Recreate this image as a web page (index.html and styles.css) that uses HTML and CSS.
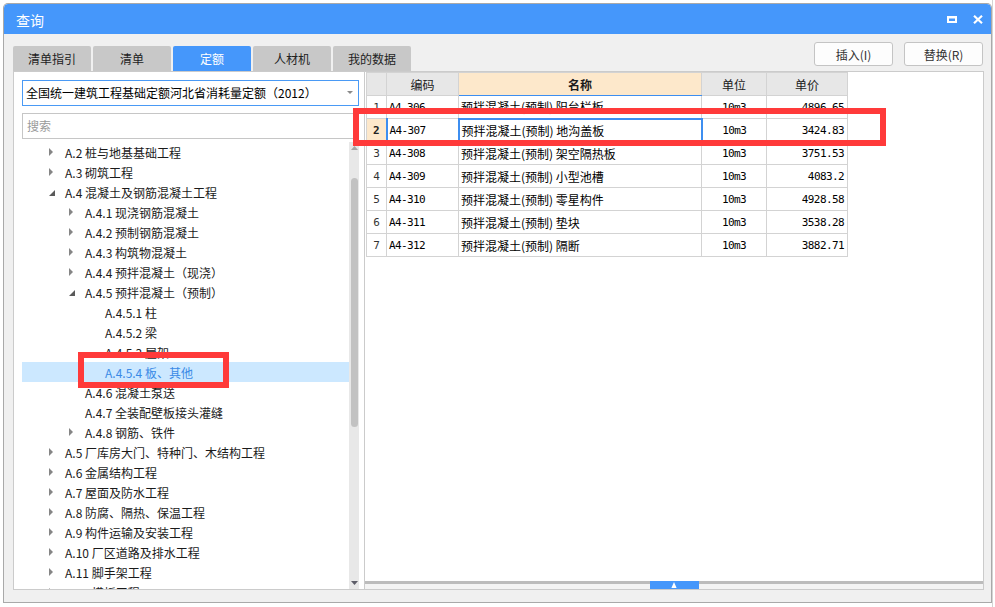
FILE: index.html
```html
<!DOCTYPE html>
<html lang="zh-CN">
<head>
<meta charset="utf-8">
<title>查询</title>
<link rel="stylesheet" href="styles.css">
</head>
<body>
<div class="desk">
  <div class="dialog">
    <div class="titlebar">
      <span class="title">查询</span>
      <div class="winbtns">
        <svg class="wb" width="10" height="7" viewBox="0 0 10 7"><path d="M0 0H10V7H0Z M2 2.6V5H8V2.6Z" fill="#fff" fill-rule="evenodd"/></svg>
        <svg class="wb" width="10" height="9" viewBox="0 0 10 9"><path d="M1 0.8L9 8.2M9 0.8L1 8.2" stroke="#fff" stroke-width="2.2"/></svg>
      </div>
    </div>
    <div class="body">
      <div class="toolbar">
        <div class="tabs">
          <div class="tab">清单指引</div>
          <div class="tab">清单</div>
          <div class="tab active">定额</div>
          <div class="tab">人材机</div>
          <div class="tab">我的数据</div>
        </div>
        <div class="actions">
          <button class="btn">插入(I)</button>
          <button class="btn">替换(R)</button>
        </div>
      </div>
      <div class="panels">
        <div class="leftpanel">
          <div class="select">
            <span class="select-text">全国统一建筑工程基础定额河北省消耗量定额（2012）</span>
            <svg class="caret" width="6" height="3" viewBox="0 0 6 3"><path d="M0 0H6L3 3Z" fill="#8a8a8a"/></svg>
          </div>
          <div class="search">搜索</div>
          <div class="treewrap">
            <ul class="tree">
              <li class="node l1"><span class="tw closed"></span><span>A.2 桩与地基基础工程</span></li>
              <li class="node l1"><span class="tw closed"></span><span>A.3 砌筑工程</span></li>
              <li class="node l1"><span class="tw open"></span><span>A.4 混凝土及钢筋混凝土工程</span></li>
              <li class="node l2"><span class="tw closed"></span><span>A.4.1 现浇钢筋混凝土</span></li>
              <li class="node l2"><span class="tw closed"></span><span>A.4.2 预制钢筋混凝土</span></li>
              <li class="node l2"><span class="tw closed"></span><span>A.4.3 构筑物混凝土</span></li>
              <li class="node l2"><span class="tw closed"></span><span>A.4.4 预拌混凝土（现浇）</span></li>
              <li class="node l2"><span class="tw open"></span><span>A.4.5 预拌混凝土（预制）</span></li>
              <li class="node l3"><span class="tw"></span><span>A.4.5.1 柱</span></li>
              <li class="node l3"><span class="tw"></span><span>A.4.5.2 梁</span></li>
              <li class="node l3"><span class="tw"></span><span>A.4.5.3 屋架</span></li>
              <li class="node l3 selected"><span class="tw"></span><span>A.4.5.4 板、其他</span></li>
              <li class="node l2"><span class="tw"></span><span>A.4.6 混凝土泵送</span></li>
              <li class="node l2"><span class="tw"></span><span>A.4.7 全装配壁板接头灌缝</span></li>
              <li class="node l2"><span class="tw closed"></span><span>A.4.8 钢筋、铁件</span></li>
              <li class="node l1"><span class="tw closed"></span><span>A.5 厂库房大门、特种门、木结构工程</span></li>
              <li class="node l1"><span class="tw closed"></span><span>A.6 金属结构工程</span></li>
              <li class="node l1"><span class="tw closed"></span><span>A.7 屋面及防水工程</span></li>
              <li class="node l1"><span class="tw closed"></span><span>A.8 防腐、隔热、保温工程</span></li>
              <li class="node l1"><span class="tw closed"></span><span>A.9 构件运输及安装工程</span></li>
              <li class="node l1"><span class="tw closed"></span><span>A.10 厂区道路及排水工程</span></li>
              <li class="node l1"><span class="tw closed"></span><span>A.11 脚手架工程</span></li>
              <li class="node l1"><span class="tw closed"></span><span>A.12 模板工程</span></li>
            </ul>
            <div class="vscroll">
              <div class="sb-btn"><svg width="7" height="4" viewBox="0 0 7 4"><path d="M3.5 0L7 4H0Z" fill="#a6a6a6"/></svg></div>
              <div class="sb-thumb"></div>
              <div class="sb-fill"></div>
              <div class="sb-btn"><svg width="7" height="4" viewBox="0 0 7 4"><path d="M0 0H7L3.5 4Z" fill="#5d5d68"/></svg></div>
            </div>
          </div>
        </div>
        <div class="rightpanel">
          <div class="gridarea">
            <table class="grid">
              <colgroup><col class="c-rn"><col class="c-code"><col class="c-name"><col class="c-unit"><col class="c-price"></colgroup>
              <thead>
                <tr><th></th><th>编码</th><th class="hsel">名称</th><th>单位</th><th>单价</th></tr>
              </thead>
              <tbody>
                <tr><td class="rn">1</td><td class="code">A4-306</td><td class="name">预拌混凝土(预制) 阳台栏板</td><td class="unit">10m3</td><td class="price">4896.65</td></tr>
                <tr><td class="rn rsel">2</td><td class="code">A4-307</td><td class="name csel">预拌混凝土(预制) 地沟盖板</td><td class="unit">10m3</td><td class="price">3424.83</td></tr>
                <tr><td class="rn">3</td><td class="code">A4-308</td><td class="name">预拌混凝土(预制) 架空隔热板</td><td class="unit">10m3</td><td class="price">3751.53</td></tr>
                <tr><td class="rn">4</td><td class="code">A4-309</td><td class="name">预拌混凝土(预制) 小型池槽</td><td class="unit">10m3</td><td class="price">4083.2</td></tr>
                <tr><td class="rn">5</td><td class="code">A4-310</td><td class="name">预拌混凝土(预制) 零星构件</td><td class="unit">10m3</td><td class="price">4928.58</td></tr>
                <tr><td class="rn">6</td><td class="code">A4-311</td><td class="name">预拌混凝土(预制) 垫块</td><td class="unit">10m3</td><td class="price">3538.28</td></tr>
                <tr><td class="rn">7</td><td class="code">A4-312</td><td class="name">预拌混凝土(预制) 隔断</td><td class="unit">10m3</td><td class="price">3882.71</td></tr>
              </tbody>
            </table>
          </div>
          <div class="splitter">
            <div class="handle"><svg width="6" height="6" viewBox="0 0 6 6"><path d="M3 0L5.6 6H0.4Z" fill="#fff"/></svg></div>
          </div>
        </div>
      </div>
    </div>
  </div>
  <div class="mark mark-row"></div>
  <div class="mark mark-tree"></div>
</div>
</body>
</html>
```

FILE: styles.css
```css
* { box-sizing: border-box; }
html, body { margin: 0; padding: 0; }
body {
  width: 995px;
  height: 607px;
  overflow: hidden;
  background: #fff;
  font-family: "Noto Sans CJK SC", "Noto Sans", sans-serif;
  font-size: 12px;
  color: #1a1a1a;
}
.desk {
  position: relative;
  width: 995px;
  height: 607px;
  background: #fff linear-gradient(to right, transparent 992px, #d4d4d4 992px, #d4d4d4 993px, transparent 993px);
}
.dialog {
  position: absolute;
  left: 4px;
  top: 4px;
  width: 987px;
  height: 598px;
  display: flex;
  flex-direction: column;
  background: #f0f0f0;
  box-shadow: 0 0 0 1px #a9a9a9;
  border-radius: 4px 4px 0 0;
  overflow: hidden;
}
.titlebar {
  height: 30px;
  flex: none;
  display: flex;
  align-items: center;
  justify-content: space-between;
  background: #4597fb;
  border-radius: 4px 4px 0 0;
  padding: 2px 8px 0 12px;
}
.title { color: #fff; font-size: 14px; }
.winbtns { display: flex; align-items: center; gap: 16px; padding-bottom: 2px; }
.wb { display: block; }
.body {
  flex: 1;
  min-height: 0;
  display: flex;
  flex-direction: column;
  padding: 8px 7px 12px 9px;
}
.toolbar {
  height: 29px;
  flex: none;
  display: flex;
  justify-content: space-between;
}
.tabs { display: flex; gap: 2px; align-self: flex-end; }
.tab {
  width: 78px;
  height: 25px;
  background: #c8c8c8;
  color: #222;
  border-radius: 2px 2px 0 0;
  display: flex;
  align-items: center;
  justify-content: center;
}
.tab.active { background: #4597fb; color: #fff; }
.actions { display: flex; gap: 11px; align-items: flex-start; padding-right: 1px; }
.btn {
  width: 79px;
  height: 24px;
  border: 1px solid #c4c4c4;
  border-radius: 3px;
  background: #fdfdfd;
  font-family: "Noto Sans CJK SC", "Noto Sans", sans-serif;
  font-size: 12px;
  color: #333;
  padding: 0;
}
.panels { flex: 1; min-height: 0; display: flex; }
.leftpanel {
  width: 352px;
  flex: none;
  min-height: 0;
  overflow: hidden;
  background: #fff;
  border: 1px solid #cbcbcb;
  display: flex;
  flex-direction: column;
  padding: 8px 5px 0 8px;
}
.select {
  height: 26px;
  flex: none;
  border: 1px solid #4a9af5;
  display: flex;
  align-items: center;
  justify-content: space-between;
  padding: 0 5px 2px 3px;
  color: #000;
}
.caret { display: block; margin-top: 1px; }
.search {
  margin-top: 7px;
  height: 26px;
  flex: none;
  border: 1px solid #c6c6c6;
  color: #9a9a9a;
  display: flex;
  align-items: center;
  padding: 0 0 1px 4px;
}
.treewrap {
  margin-top: 3px;
  flex: 1;
  display: flex;
  overflow: hidden;
  min-height: 0;
}
.tree {
  list-style: none;
  margin: 0;
  padding: 0;
  flex: 1;
  overflow: hidden;
  color: #1a1a1a;
}
.node {
  height: 20px;
  display: flex;
  align-items: center;
  white-space: nowrap;
}
.l1 { padding-left: 27px; }
.l2 { padding-left: 47px; }
.l3 { padding-left: 67px; }
.node.selected { background: #cce8ff; color: #3a8ae6; }
.tw { width: 16px; flex: none; display: flex; align-items: center; height: 20px; }
.tw.closed::before {
  content: "";
  width: 0;
  height: 0;
  border-left: 4px solid #858585;
  border-top: 4px solid transparent;
  border-bottom: 4px solid transparent;
}
.tw.open::before {
  content: "";
  width: 0;
  height: 0;
  margin-top: 1px;
  border-bottom: 6px solid #5a5a5a;
  border-left: 6px solid transparent;
}
.vscroll {
  width: 10px;
  flex: none;
  background: #e8e8e8;
  display: flex;
  flex-direction: column;
  align-items: center;
}
.sb-btn { height: 12px; flex: none; display: flex; align-items: center; justify-content: center; }
.sb-btn svg { display: block; }
.sb-thumb {
  margin-top: 24px;
  width: 7px;
  height: 249px;
  flex: none;
  background: #c2c2c2;
  border-radius: 4px;
}
.sb-fill { flex: 1; }
.rightpanel {
  flex: 1;
  min-height: 0;
  background: #fff;
  border: 1px solid #cbcbcb;
  border-left: 0;
  display: flex;
  flex-direction: column;
}
.gridarea { flex: 1; min-height: 0; padding-left: 1px; }
.grid {
  border-collapse: collapse;
  table-layout: fixed;
  width: 481px;
}
.c-rn { width: 20px; }
.c-code { width: 72px; }
.c-name { width: 243px; }
.c-unit { width: 65px; }
.c-price { width: 81px; }
.grid th, .grid td {
  border: 1px solid #d3d3d3;
  height: 23px;
  padding: 0 3px;
  white-space: nowrap;
  overflow: hidden;
}
.grid th {
  background: #e7e7e7;
  font-weight: normal;
  font-size: 12px;
  color: #1a1a1a;
}
.grid th.hsel {
  background: #fde8cb;
  font-weight: bold;
  border-bottom: 1px solid #3d8ef0;
}
.grid td { color: #000; }
.rn, .code, .unit, .price {
  font-family: "DejaVu Sans Mono", "Liberation Mono", monospace;
  font-size: 11px;
  letter-spacing: -0.6px;
}
.grid td.rn { text-align: center; padding: 0; color: #333; letter-spacing: 0; }
.grid td.rsel { background: #fde8cb; font-weight: bold; color: #222; border-right: 2px solid #3d8ef0; }
.grid td.code { padding-left: 2px; }
.grid td.name { padding-left: 2px; }
.grid td.csel { border: 2px solid #3d8ef0; }
.grid td.unit { text-align: center; }
.grid td.price { text-align: right; padding-right: 3px; }
.splitter {
  height: 8px;
  flex: none;
  background: linear-gradient(#bcbcbc 0, #bcbcbc 3px, #f4f4f4 3px);
  display: flex;
  justify-content: center;
}
.handle {
  width: 49px;
  height: 8px;
  background: #4597fb;
  display: flex;
  align-items: flex-end;
  justify-content: center;
  padding-bottom: 1px;
}
.handle svg { display: block; }
.mark {
  position: absolute;
  border: 6px solid #ff3a3a;
}
.mark-row { left: 353px; top: 108px; width: 533px; height: 38px; }
.mark-tree { left: 78px; top: 352px; width: 151px; height: 36px; }
```
